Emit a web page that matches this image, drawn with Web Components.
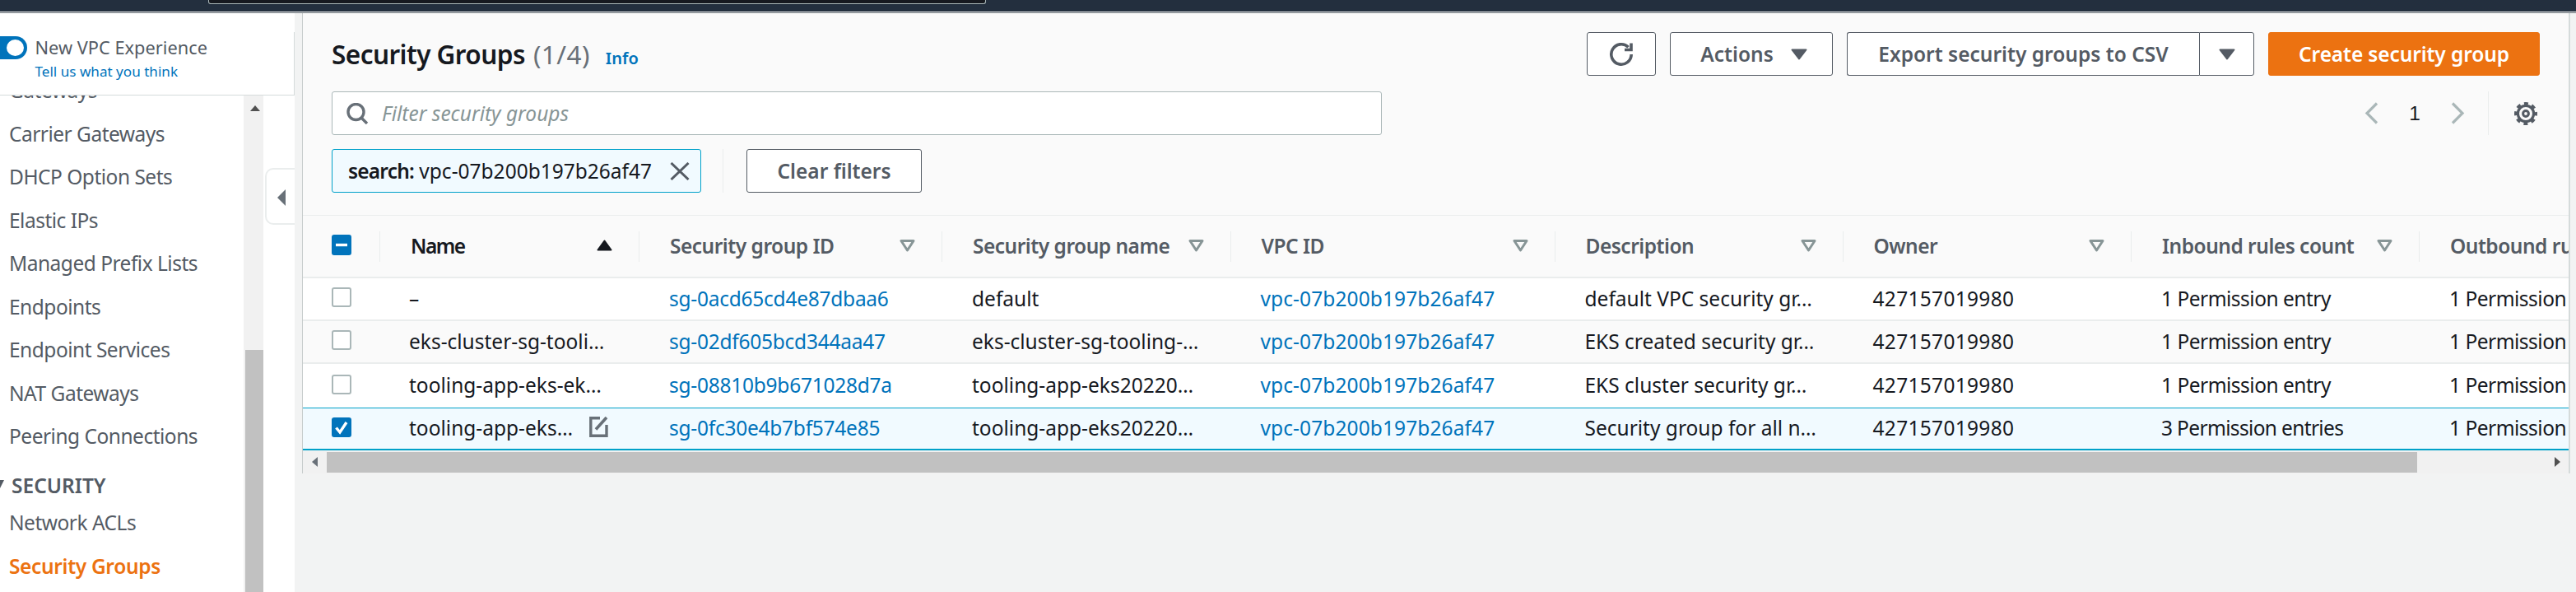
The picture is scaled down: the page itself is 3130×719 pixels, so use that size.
<!DOCTYPE html>
<html lang="en"><head><meta charset="utf-8"><title>Security Groups</title>
<style>
html,body{margin:0;padding:0;height:719px;overflow:hidden;background:#f2f3f3;font-family:"Noto Sans",sans-serif;font-size:24.5px;color:#16191f}
</style></head><body>
<aws-topbar></aws-topbar>
<aws-shell>
  <aws-sidebar></aws-sidebar>
  <aws-panel>
    <aws-page-header></aws-page-header>
    <aws-data-table></aws-data-table>
  </aws-panel>
</aws-shell>
<script>
const ICON={
 down:'<svg width="20" height="14" viewBox="0 0 20 14"><path d="M1.5 1.5H18.5L10 12.5Z" fill="currentColor" stroke="currentColor" stroke-width="2" stroke-linejoin="round"/></svg>',
 refresh:'<svg width="30" height="30" viewBox="0 0 30 30" fill="none" stroke="#545b64" stroke-width="3.6"><path d="M23.5 6.2A12.2 12.2 0 1 0 27.2 15"/><path d="M27 1.5V9.5H19"/></svg>',
 search:'<svg width="27" height="26" viewBox="0 0 27 26" fill="none" stroke="#687078" stroke-width="3.4"><circle cx="11.5" cy="11" r="9.5"/><path d="M18 18L25 25"/></svg>',
 close:'<svg width="24" height="22" viewBox="0 0 24 22" fill="none" stroke="#545b64" stroke-width="3"><path d="M1.5 1L22.5 21M22.5 1L1.5 21"/></svg>',
 filter:'<svg width="19" height="15" viewBox="0 0 19 15"><path d="M2 1.5H17L9.5 13Z" fill="none" stroke="#879596" stroke-width="3" stroke-linejoin="round"/></svg>',
 sort:'<svg width="19" height="14" viewBox="0 0 19 14"><path d="M9.5 1.5L17.5 12.5H1.5Z" fill="#16191f" stroke="#16191f" stroke-width="2" stroke-linejoin="round"/></svg>',
 edit:'<svg width="23" height="25" viewBox="0 0 23 25" fill="none" stroke="#687078" stroke-width="3.4"><path d="M13 1.8H1.8V23.2H21V10"/><path d="M8 15.5L21 1" stroke-width="3.6"/></svg>',
 gear:'<svg width="28" height="28" viewBox="0 0 28 28" fill="none" stroke="#545b64"><circle cx="14" cy="14" r="9.6" stroke-width="3.2"/><circle cx="14" cy="14" r="12" stroke-width="4" stroke-dasharray="4.9 4.53" stroke-dashoffset="2.45"/><circle cx="14" cy="14" r="3.4" stroke-width="3"/></svg>',
 left:'<svg width="17" height="27" viewBox="0 0 17 27" fill="none" stroke="#aab7b8" stroke-width="3.2"><path d="M15 1.5L3 13.5L15 25.5"/></svg>',
 right:'<svg width="17" height="27" viewBox="0 0 17 27" fill="none" stroke="#aab7b8" stroke-width="3.2"><path d="M2 1.5L14 13.5L2 25.5"/></svg>'
};
function def(name,html,init){
  customElements.define(name,class extends HTMLElement{
    constructor(){super();const r=this.attachShadow({mode:'open'});r.innerHTML=typeof html==='function'?html(this):html;}
    connectedCallback(){ if(init&&!this._i){this._i=1;init(this,this.shadowRoot);} }
  });
}
def('aws-topbar',`<style>
:host{display:block;height:16px;background:#232f3e;box-sizing:border-box;border-bottom:1px solid #687078}
.w{height:14px;overflow:hidden;border-bottom:1px solid #eef0f0}
.s{box-sizing:border-box;margin-left:253px;width:945px;height:5px;background:#16191f;border:1px solid #aab7b8;border-top:0;border-radius:0 0 3px 3px}
</style><div class="w"><div class="s"></div></div>`);
def('aws-shell',`<style>
:host{display:grid;grid-template-columns:358px 1fr;height:703px;overflow:hidden}
</style><slot></slot>`);
const NAV=[['Gateways'],['Carrier Gateways'],['DHCP Option Sets'],['Elastic IPs'],['Managed Prefix Lists'],['Endpoints'],['Endpoint Services'],['NAT Gateways'],['Peering Connections'],['SECURITY','h'],['Network ACLs'],['Security Groups','a']];
def('aws-sidebar',`<style>
:host{display:block;position:relative;background:#fff;overflow:hidden;color:#545b64;height:703px}
ul{list-style:none;margin:0;padding:68px 0 0 11px}
li{height:52.5px;line-height:52.5px;white-space:nowrap;letter-spacing:-.5px}
li.h{font-weight:600;height:39px;line-height:39px;margin-top:13.5px;padding-left:3px;position:relative;letter-spacing:0}
li.a{font-weight:600;color:#ec7211;letter-spacing:-.35px}
li.h svg{position:absolute;left:-11px;top:13px}
.top{position:absolute;left:0;top:0;width:358px;height:100px;box-sizing:border-box;background:#fff linear-gradient(#d5dbdb,#d5dbdb) right 23px/1px 100% no-repeat;border-bottom:1px solid #d5dbdb;display:flex;align-items:flex-start;padding:28px 0 0 0}
.tg{width:33px;height:28px;background:#0073bb;border-radius:0 14px 14px 0;position:relative;flex:none;margin-right:9.5px}
.tg i{position:absolute;left:8px;top:4px;width:21px;height:20px;background:#fff;border-radius:50%}
.t1{font-size:21.8px;line-height:28px;color:#545b64;white-space:nowrap}
.t2{font-size:17.1px;line-height:24px;color:#0073bb;margin-top:3px;white-space:nowrap}
.sb{position:absolute;left:296px;top:100px;bottom:0;width:24px;background:#f1f1f1}
.sb b{position:absolute;left:8px;top:12px;width:0;height:0;border:6.5px solid transparent;border-top:0;border-bottom:7px solid #505050}
.sb u{position:absolute;left:2px;right:0;top:309px;bottom:0;background:#c1c1c1}
.col{position:absolute;left:322px;top:188px;width:36px;height:69px;box-sizing:border-box;background:#fff;border:2px solid #eaeded;border-right:0;border-radius:10px 0 0 10px}
.col b{position:absolute;left:13px;top:24px;width:0;height:0;border:10px solid transparent;border-left:0;border-right:10px solid #687078}
</style>
<ul id="l"></ul>
<div class="sb"><b></b><u></u></div>
<div class="col"><b></b></div>
<div class="top"><div class="tg"><i></i></div><div><div class="t1">New VPC Experience</div><div class="t2">Tell us what you think</div></div></div>`,
(h,r)=>{r.getElementById('l').innerHTML=NAV.map(([t,c])=>`<li class="${c||''}">${c==='h'?'<svg width="6" height="12" viewBox="0 0 6 12"><path d="M-6 0H5L-1 12Z" fill="#545b64"/></svg>':''}${t}</li>`).join('');});
def('aws-button',`<style>
:host{display:inline-flex;box-sizing:border-box;height:53px;align-items:center;justify-content:center;gap:21px;background:#fff;border:1px solid #545b64;border-radius:3px;color:#545b64;font-weight:600;white-space:nowrap}
:host([primary]){background:#ec7211;border-color:#ec7211;color:#fff;letter-spacing:-.12px}
</style><slot></slot>`);
def('aws-token',`<style>
:host{display:flex;align-items:center;box-sizing:border-box;width:449px;height:53px;padding:0 13px 0 19px;background:#f1faff;border:1px solid #00a1c9;border-radius:3px;justify-content:space-between;white-space:nowrap}
b{font-weight:600;letter-spacing:-.8px}
</style><span><b>search:</b> vpc-07b200b197b26af47</span>${ICON.close}`);
def('aws-filter-input',`<style>
:host{display:flex;align-items:center;box-sizing:border-box;width:1276px;height:53px;padding-left:17px;gap:16px;background:#fff;border:1px solid #aab7b8;border-radius:3px;color:#879596;font-style:italic;white-space:nowrap}
</style>${ICON.search}<span>Filter security groups</span>`);
def('aws-pager',`<style>
:host{display:flex;align-items:center;height:53px;color:#16191f;padding-right:3px}
.n{width:90px;text-align:center;font-family:"Liberation Sans",sans-serif;margin:0 -1px}
.s{width:1px;height:53px;background:#eaeded;margin:0 31px 0 28px}
svg{display:block}
</style>${ICON.left}<span class="n">1</span>${ICON.right}<span class="s"></span>${ICON.gear}`);
def('aws-page-header',`<style>
:host{display:block;padding:23px 35px 27px 35px;background:#fafafa}
.r{display:flex;align-items:center;justify-content:space-between}
.r2{margin-top:19px}.r3{margin-top:17px;justify-content:flex-start}
h1{margin:0;height:53px;display:flex;align-items:baseline;font-size:31.5px;font-weight:600;line-height:53px;color:#16191f;white-space:pre;letter-spacing:-.55px}
h1 span{font-weight:400;color:#687078;margin-left:10px;letter-spacing:.45px}
h1 a{font-size:20px;font-weight:600;color:#0073bb;margin-left:19px;line-height:1;letter-spacing:0}
.btns{display:flex;gap:17px}
.split{display:flex}
.sep{width:1px;height:53px;background:#eaeded;margin:0 28px 0 26px}
aws-button svg{display:block}
</style>
<div class="r"><h1>Security Groups<span>(1/4)</span><a>Info</a></h1>
<div class="btns">
 <aws-button style="width:84px">${ICON.refresh}</aws-button>
 <aws-button style="width:198px;padding-left:6px">Actions ${ICON.down}</aws-button>
 <div class="split"><aws-button style="width:428px;border-right:0;border-radius:3px 0 0 3px">Export security groups to CSV</aws-button><aws-button style="width:67px;border-radius:0 3px 3px 0">${ICON.down}</aws-button></div>
 <aws-button primary style="width:330px">Create security group</aws-button>
</div></div>
<div class="r r2"><aws-filter-input></aws-filter-input><aws-pager></aws-pager></div>
<div class="r r3"><aws-token></aws-token><span class="sep"></span><aws-button style="width:213px">Clear filters</aws-button></div>`);
const COLS='94px 315px 368px 350.5px 394px 350px 350.5px 350px 181px';
def('aws-checkbox',`<style>
:host{display:block;box-sizing:border-box;width:24px;height:24px;margin-bottom:4px;border:2px solid #aab7b8;border-radius:3px;background:#fff;position:relative}
:host([state]){background:#0073bb;border-color:#0073bb}
:host([state=mixed]){height:25px}
svg{position:absolute;left:-2px;top:-2px}
</style><svg id="s" width="24" height="24" viewBox="0 0 24 24" fill="none" stroke="#fff" stroke-width="3.4"></svg>`,
(h,r)=>{const s=h.getAttribute('state');r.getElementById('s').innerHTML=s==='mixed'?'<path d="M5 12.5H19"/>':s==='checked'?'<path d="M5.5 12.5L10 18L18 6"/>':'';});
def('aws-cell',`<style>
:host{display:flex;align-items:center;box-sizing:border-box;min-width:0;padding:0 0 2px var(--pl,36px);white-space:nowrap;overflow:hidden;letter-spacing:var(--ls,0)}
:host([link]){color:#0073bb}
</style><slot></slot>`);
def('aws-header-cell',`<style>
:host{display:flex;align-items:center;justify-content:space-between;box-sizing:border-box;min-width:0;height:37px;padding:0 32px 2px 37px;border-right:1px solid #eaeded;font-weight:600;color:#545b64;white-space:nowrap;overflow:hidden;letter-spacing:-.5px}
:host([last]){border-right:0}
:host([sorted]){color:#16191f;letter-spacing:-1.5px}
</style><slot></slot><span id="i" style="display:flex;flex:none"></span>`,
(h,r)=>{r.getElementById('i').innerHTML=h.hasAttribute('last')?'':h.hasAttribute('sorted')?ICON.sort:ICON.filter;});
const HEAD=['Name','Security group ID','Security group name','VPC ID','Description','Owner','Inbound rules count','Outbound rules count'];
const V='vpc-07b200b197b26af47',O='427157019980',P='1 Permission entry';
const ROWS=[
['–','sg-0acd65cd4e87dbaa6','default',V,'default VPC security gr…',O,P,P],
['eks-cluster-sg-tooli…','sg-02df605bcd344aa47','eks-cluster-sg-tooling-…',V,'EKS created security gr…',O,P,P],
['tooling-app-eks-ek…','sg-08810b9b671028d7a','tooling-app-eks20220…',V,'EKS cluster security gr…',O,P,P],
['tooling-app-eks…','sg-0fc30e4b7bf574e85','tooling-app-eks20220…',V,'Security group for all n…',O,'3 Permission entries',P]];
const LS={1:'-.25px',3:'.1px',5:'.3px',6:'-.5px',7:'-.5px'};
def('aws-data-table',`<style>
:host{display:block;overflow:hidden}
.h,.row{display:grid;grid-template-columns:${COLS};width:2753px;box-sizing:border-box}
.h{height:77px;background:#fafafa;border-top:1px solid #eaeded;border-bottom:2px solid #eaeded;align-items:center}
.h .c0{height:37px;display:flex;align-items:center;padding-left:35px;border-right:1px solid #eaeded;box-sizing:border-box}
.row{background:#fff;height:52px;border-bottom:2px solid #eaeded}
.row.alt{background:#fafafa}
.row.r3{height:53px;border-bottom:0}
.row.sel{height:52px;background:#f1faff;border-top:1px solid #00a1c9;border-bottom:2px solid #00a1c9}
.row .c0{display:flex;align-items:center;padding-left:35px}
.e{margin:4px 38px 0 auto;flex:none;display:block}
.nm{--pl:35px}
.bar{height:28px;background:#f1f1f1;position:relative}
.bar u{position:absolute;left:29px;width:2540px;top:2px;height:25px;background:#c1c1c1}
.bar .l,.bar .rr{position:absolute;top:8px;width:0;height:0;border:6.5px solid transparent}
.bar .l{left:11px;border-left:0;border-right:7px solid #687078}
.bar .rr{left:2736px;border-right:0;border-left:7px solid #505050}
</style><div id="t"></div><div class="bar"><i class="l"></i><u></u><i class="rr"></i></div>`,
(h,r)=>{
 let s='<div class="h"><div class="c0"><aws-checkbox state="mixed"></aws-checkbox></div>'+HEAD.map((t,i)=>`<aws-header-cell ${i==0?'sorted':''} ${i==7?'last':''}><span>${t}</span></aws-header-cell>`).join('')+'</div>';
 ROWS.forEach((c,i)=>{
  s+=`<div class="row ${i==3?'sel':''} ${i==2?'r3':''} ${i==1?'alt':''}"><div class="c0"><aws-checkbox ${i==3?'state="checked"':''}></aws-checkbox></div>`+
   c.map((t,j)=>{const ls=(i==3&&j==6)?'-.65px':(LS[j]||'0');return `<aws-cell ${(j==1||j==3)?'link':''} class="${j==0?'nm':''}" style="--ls:${ls}">${t}${(i==3&&j==0)?`<span class="e">${ICON.edit}</span>`:''}</aws-cell>`;}).join('')+'</div>';
 });
 r.getElementById('t').innerHTML=s;
});
def('aws-panel',`<style>
:host{display:block;padding-left:9px;background:#f2f3f3;overflow:hidden;height:703px}
.p{box-sizing:border-box;width:2756px;border-left:1px solid #c6cbcb;border-right:2px solid #d5dbdb;background:#fafafa;overflow:hidden}
</style><div class="p"><slot></slot></div>`);
</script>
</body></html>
